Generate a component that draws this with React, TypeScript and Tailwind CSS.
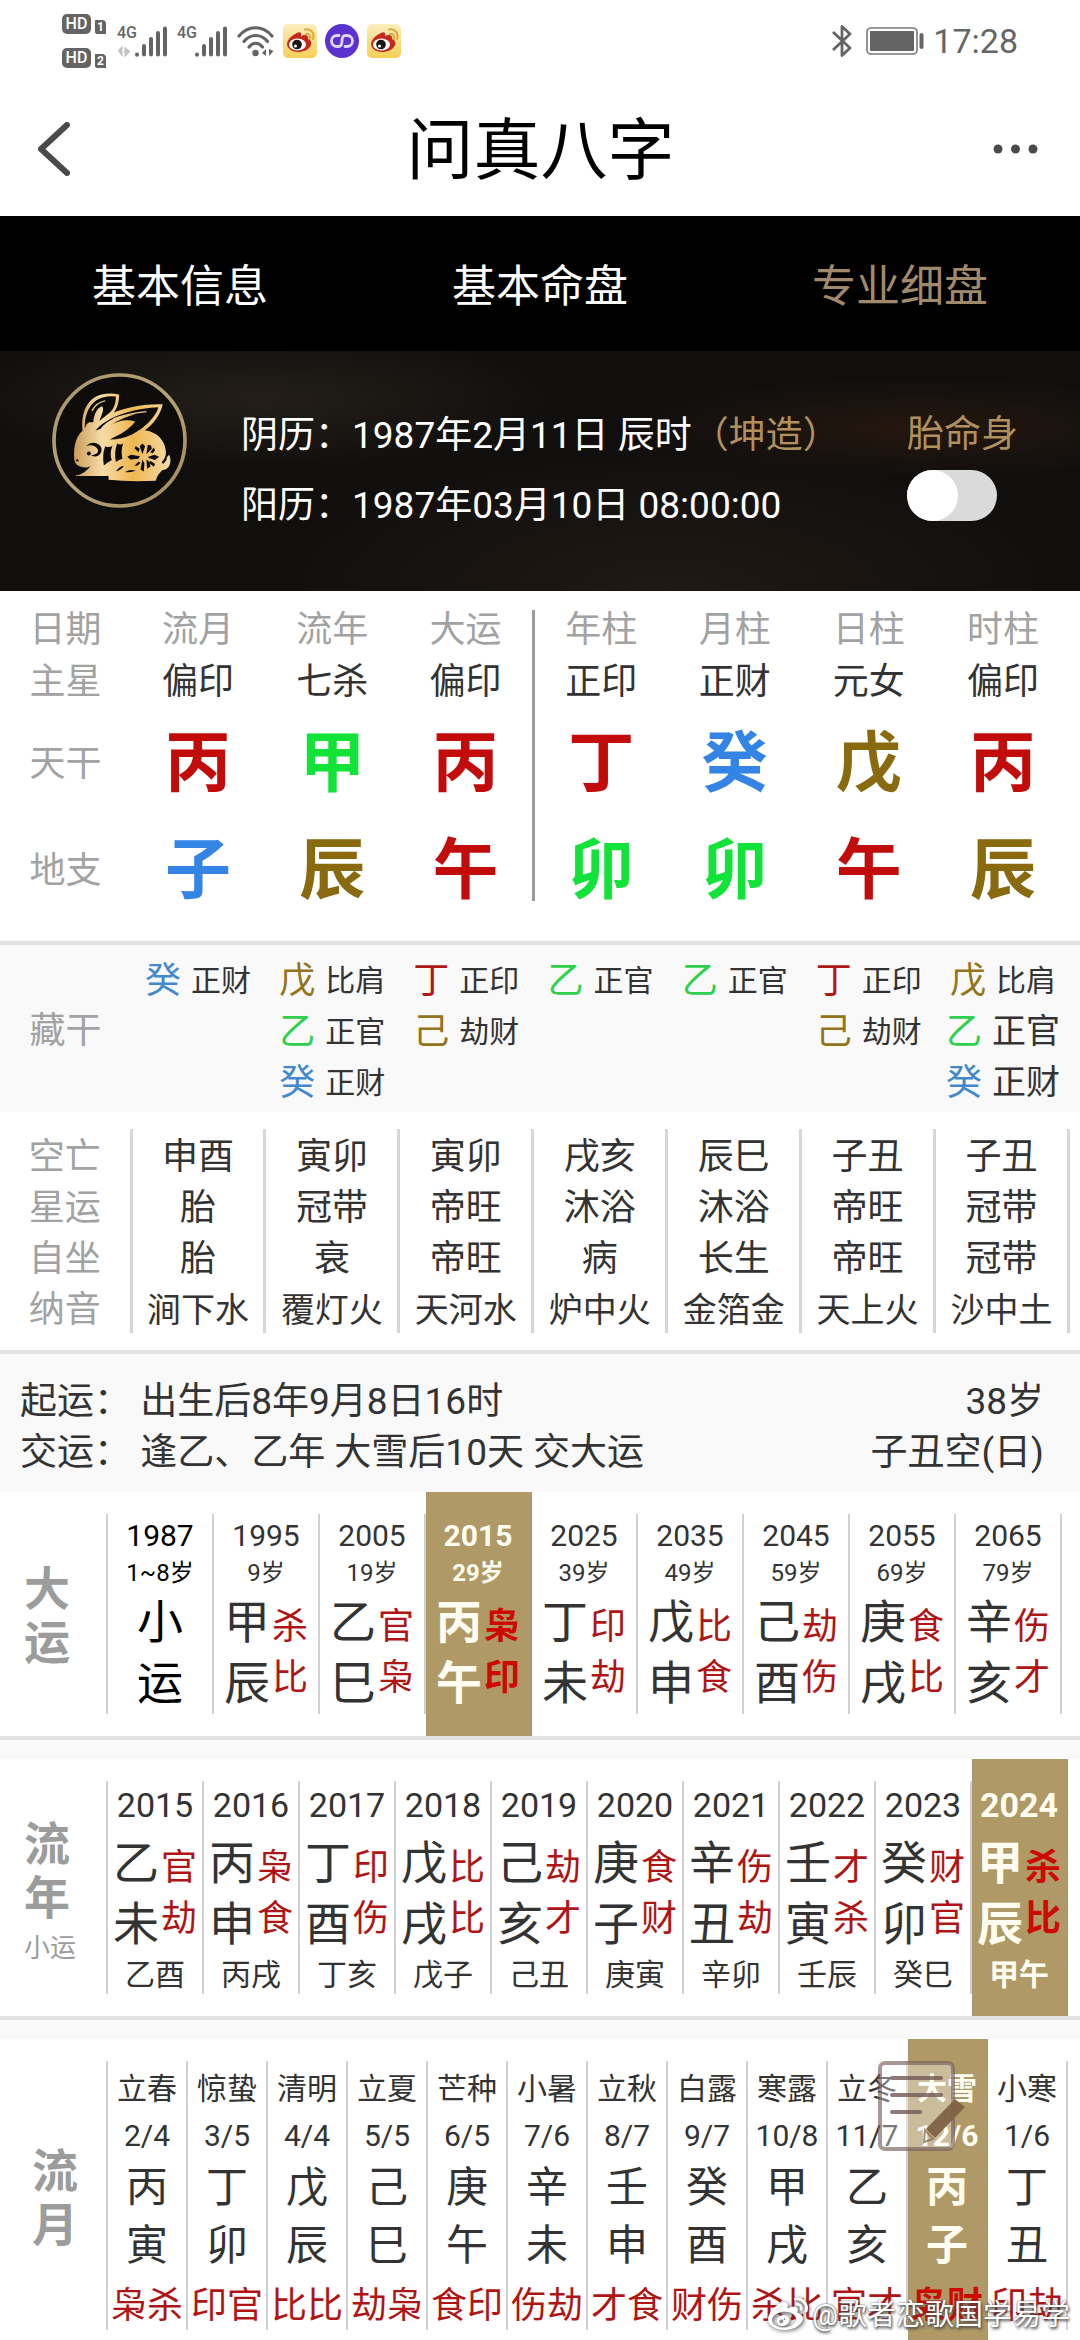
import React, { useState } from 'react';
import { FaWeibo } from 'react-icons/fa';

type Element = 'fire' | 'wood' | 'water' | 'earth';

const elementColor: Record<Element, string> = {
  fire: 'text-[#c20c0c]',
  wood: 'text-[#12e338]',
  water: 'text-[#3384e4]',
  earth: 'text-[#8a6a0f]',
};

const hiddenColor: Record<Element, string> = {
  fire: 'text-[#b01818]',
  wood: 'text-[#2fd04e]',
  water: 'text-[#4288cc]',
  earth: 'text-[#94741a]',
};

const stemElement: Record<string, Element> = {
  甲: 'wood',
  乙: 'wood',
  丙: 'fire',
  丁: 'fire',
  戊: 'earth',
  己: 'earth',
  癸: 'water',
  子: 'water',
  卯: 'wood',
  辰: 'earth',
  午: 'fire',
};

interface Pillar {
  name: string;
  star: string;
  stem: string;
  branch: string;
  hidden: string[][];
  details: string[];
}

const pillars: Pillar[] = [
  { name: '流月', star: '偏印', stem: '丙', branch: '子', hidden: [['癸', '正财']], details: ['申酉', '胎', '胎', '涧下水'] },
  { name: '流年', star: '七杀', stem: '甲', branch: '辰', hidden: [['戊', '比肩'], ['乙', '正官'], ['癸', '正财']], details: ['寅卯', '冠带', '衰', '覆灯火'] },
  { name: '大运', star: '偏印', stem: '丙', branch: '午', hidden: [['丁', '正印'], ['己', '劫财']], details: ['寅卯', '帝旺', '帝旺', '天河水'] },
  { name: '年柱', star: '正印', stem: '丁', branch: '卯', hidden: [['乙', '正官']], details: ['戌亥', '沐浴', '病', '炉中火'] },
  { name: '月柱', star: '正财', stem: '癸', branch: '卯', hidden: [['乙', '正官']], details: ['辰巳', '沐浴', '长生', '金箔金'] },
  { name: '日柱', star: '元女', stem: '戊', branch: '午', hidden: [['丁', '正印'], ['己', '劫财']], details: ['子丑', '帝旺', '帝旺', '天上火'] },
  { name: '时柱', star: '偏印', stem: '丙', branch: '辰', hidden: [['戊', '比肩'], ['乙', '正官'], ['癸', '正财']], details: ['子丑', '冠带', '冠带', '沙中土'] },
];

const detailLabels = ['空亡', '星运', '自坐', '纳音'];

const decades = [
  { year: '1987', age: '1~8岁', pair: '小运', gods: '' },
  { year: '1995', age: '9岁', pair: '甲辰', gods: '杀比' },
  { year: '2005', age: '19岁', pair: '乙巳', gods: '官枭' },
  { year: '2015', age: '29岁', pair: '丙午', gods: '枭印' },
  { year: '2025', age: '39岁', pair: '丁未', gods: '印劫' },
  { year: '2035', age: '49岁', pair: '戊申', gods: '比食' },
  { year: '2045', age: '59岁', pair: '己酉', gods: '劫伤' },
  { year: '2055', age: '69岁', pair: '庚戌', gods: '食比' },
  { year: '2065', age: '79岁', pair: '辛亥', gods: '伤才' },
];

const years = [
  { year: '2015', pair: '乙未', gods: '官劫', minor: '乙酉' },
  { year: '2016', pair: '丙申', gods: '枭食', minor: '丙戌' },
  { year: '2017', pair: '丁酉', gods: '印伤', minor: '丁亥' },
  { year: '2018', pair: '戊戌', gods: '比比', minor: '戊子' },
  { year: '2019', pair: '己亥', gods: '劫才', minor: '己丑' },
  { year: '2020', pair: '庚子', gods: '食财', minor: '庚寅' },
  { year: '2021', pair: '辛丑', gods: '伤劫', minor: '辛卯' },
  { year: '2022', pair: '壬寅', gods: '才杀', minor: '壬辰' },
  { year: '2023', pair: '癸卯', gods: '财官', minor: '癸巳' },
  { year: '2024', pair: '甲辰', gods: '杀比', minor: '甲午' },
];

const months = [
  { term: '立春', date: '2/4', pair: '丙寅', gods: '枭杀' },
  { term: '惊蛰', date: '3/5', pair: '丁卯', gods: '印官' },
  { term: '清明', date: '4/4', pair: '戊辰', gods: '比比' },
  { term: '立夏', date: '5/5', pair: '己巳', gods: '劫枭' },
  { term: '芒种', date: '6/5', pair: '庚午', gods: '食印' },
  { term: '小暑', date: '7/6', pair: '辛未', gods: '伤劫' },
  { term: '立秋', date: '8/7', pair: '壬申', gods: '才食' },
  { term: '白露', date: '9/7', pair: '癸酉', gods: '财伤' },
  { term: '寒露', date: '10/8', pair: '甲戌', gods: '杀比' },
  { term: '立冬', date: '11/7', pair: '乙亥', gods: '官才' },
  { term: '大雪', date: '12/6', pair: '丙子', gods: '枭财' },
  { term: '小寒', date: '1/6', pair: '丁丑', gods: '印劫' },
];

const HdBadge = ({ sim }: { sim: string }) => (
  <div className="flex items-end gap-1">
    <span className="flex h-5 w-[29px] items-center justify-center rounded-[5px] bg-[#646464] text-base font-medium text-white">HD</span>
    <span className="flex h-[14px] w-[11px] items-center justify-center rounded-tr-[4px] rounded-bl-[2px] bg-[#646464] text-xs font-bold text-white">{sim}</span>
  </div>
);

const Signal = ({ arrows }: { arrows?: boolean }) => (
  <div className="relative h-[31px] w-[50px]">
    <span className="absolute top-0 left-0 text-base leading-[14px] font-medium text-[#646464]">4G</span>
    <svg className="h-full w-full" viewBox="0 0 50 31" fill="none">
      {arrows && <path d="M1 25l4-4v9M8 21v9l5-5" fill="#c4c4c4" stroke="#c4c4c4" strokeWidth="1.2" />}
      <path d="M20 28.5v.2M27 20v8.500M34 13v15.500M41 7v21.500M48 2.500v26" stroke="#646464" strokeWidth="4" strokeLinecap="round" />
    </svg>
  </div>
);

const WifiIcon = () => (
  <svg className="h-[31px] w-[38px]" viewBox="0 0 38 31" fill="none">
    <path d="M2 10C11-1 26-1 35 10M7 15.500c6.500-8 17-8 23.500 0M12 21c4-5 9.500-5 13.500 0" stroke="#646464" strokeWidth="3.200" strokeLinecap="round" />
    <circle cx="18.500" cy="27" r="3.200" fill="#646464" />
    <path d="M25 27l4-4v7zM32 23v7l4.500-5z" fill="#646464" />
  </svg>
);

const WeiboAppIcon = ({ id }: { id: string }) => (
  <svg className="size-[34px]" viewBox="0 0 34 34" fill="none">
    <defs>
      <linearGradient id={id} x1="0" y1="0" x2="0" y2="1">
        <stop offset="0" stopColor="#fbeec0" />
        <stop offset="1" stopColor="#f6cf55" />
      </linearGradient>
    </defs>
    <rect width="34" height="34" rx="5" fill={`url(#${id})`} />
    <path d="M14 9c3-2 5 0 4 3 4-2 8-1 7 3 3 1 4 4 3 6-2 5-8 7-13 7S4 25 4 20c0-4 5-9 10-11z" fill="#c8281c" />
    <ellipse cx="14.500" cy="20.500" rx="8.500" ry="6" fill="#fff" />
    <circle cx="14" cy="20.500" r="4.800" fill="#1b1410" />
    <circle cx="12.500" cy="22" r="1.500" fill="#fff" />
    <path d="M23 10c3-1 5 2 4 5M22 5.500c6-1.500 10 4 8 9.500" stroke="#dba93a" strokeWidth="2" strokeLinecap="round" />
  </svg>
);

const LoopAppIcon = () => (
  <svg className="size-[34px]" viewBox="0 0 34 34" fill="none">
    <circle cx="17" cy="17" r="17" fill="#5b32cf" />
    <path d="M14 11.500h-2a5.500 5.500 0 000 11h1.500c3 0 3.500-2 3.500-5.500s.5-5.500 3.500-5.500H22a5.500 5.500 0 010 11h-2" stroke="#e0d6f5" strokeWidth="2.800" strokeLinecap="round" />
  </svg>
);

const StatusBar = () => (
  <div className="flex h-[82px] items-center justify-between pr-[62px] pl-[62px]">
    <div className="flex items-center">
      <div className="flex flex-col gap-[14px]">
        <HdBadge sim="1" />
        <HdBadge sim="2" />
      </div>
      <div className="ml-[11px] flex items-center gap-[10px]">
        <Signal arrows />
        <Signal />
        <WifiIcon />
      </div>
      <div className="ml-2 flex items-center gap-2">
        <WeiboAppIcon id="weibo-a" />
        <LoopAppIcon />
        <WeiboAppIcon id="weibo-b" />
      </div>
    </div>
    <div className="flex items-center">
      <svg className="h-8 w-5" viewBox="0 0 20 32" fill="none">
        <path d="M1 7l17 16-8 7.500v-29L18 9 1 25" stroke="#646464" strokeWidth="2.800" strokeLinejoin="round" />
      </svg>
      <svg className="ml-[14px] h-7 w-[58px]" viewBox="0 0 58 28" fill="none">
        <rect x="1" y="1" width="50" height="26" rx="4" stroke="#777" strokeWidth="1.600" />
        <rect x="4" y="4" width="44" height="20" rx="1" fill="#646464" />
        <rect x="53.500" y="6" width="4" height="16" rx="2" fill="#646464" />
      </svg>
      <span className="ml-[9px] text-[34px] leading-none text-[#666]">17:28</span>
    </div>
  </div>
);

const RabbitIcon = () => (
  <svg className="size-[135px] shrink-0" viewBox="66 38 406 406" fill="none">
    <defs>
      <linearGradient id="gold" x1="130" y1="0" x2="420" y2="0" gradientUnits="userSpaceOnUse">
        <stop offset="0" stopColor="#c89a56" />
        <stop offset="0.300" stopColor="#f7dca8" />
        <stop offset="0.620" stopColor="#efb751" />
        <stop offset="1" stopColor="#f5d9a4" />
      </linearGradient>
      <linearGradient id="ring" x1="0" y1="0" x2="1" y2="1">
        <stop offset="0" stopColor="#a8946a" />
        <stop offset="0.500" stopColor="#b7a377" />
        <stop offset="1" stopColor="#a18a58" />
      </linearGradient>
    </defs>
    <circle cx="269" cy="241" r="197" fill="#0d0c0b" stroke="url(#ring)" strokeWidth="11" />
    <path
      d="M133 298C129 252 143 224 158 212C152 160 172 112 215 103Q242 97 268 103C268 125 262 145 252 157C290 140 350 130 399 132C394 160 370 195 345 210C386 216 412 245 409 290Q416 292 418 282C428 305 420 328 398 330C388 340 382 348 378 362Q300 366 236 359V348H137C142 338 162 332 174 322C155 322 135 318 133 298Z"
      fill="url(#gold)"
    />
    <g fill="#0d0c0b">
      <path d="M165 206C163 160 182 122 218 112Q240 106 258 109C258 130 252 146 240 157L208 182C218 160 224 144 216 138C200 144 192 165 190 186L178 186Q168 190 165 206Z" />
      <path d="M196 212C228 172 306 144 386 141C378 170 345 203 308 222Q275 238 240 238C265 226 300 208 316 184C290 176 262 182 240 196Q280 170 318 162C268 162 228 182 212 206Z" />
      <path d="M226 258Q240 264 248 256Q238 282 246 300Q232 308 222 316Q216 284 226 258ZM262 250Q272 256 280 250Q272 272 278 296Q268 298 258 306Q252 276 262 250Z" />
      <path d="M168 258Q188 240 208 254Q222 268 210 282Q200 294 184 286Q208 282 204 268Q192 250 168 258Z" />
      <circle cx="177" cy="280" r="6" />
      <circle cx="142" cy="301" r="3.500" />
      <path d="M136 324Q165 330 182 318Q166 340 142 346L138 334ZM258 334Q270 318 282 318Q276 330 258 334ZM286 336Q300 326 318 332Q304 338 286 336ZM396 306Q408 294 409 276Q418 296 400 312Z" />
      <path d="M338 282l-8-24 8-8 8 8zM350 282l4-28 10 2 2 10zM338 298l-6 30 10 6 2-24zM350 298l2 28 10-6-2-14zM330 288l-26-4-12 6 10 8 24-2zM356 290l18-6 14 6-12 10-20-6zM326 276l-12-12 4-6 12 8zM362 276l10-14 4 8-8 10zM326 304l-12 14 10-2 8-8zM362 302l14 10-4 8-12-10z" />
    </g>
    <path d="M186 152Q200 126 226 122M250 176Q300 158 350 154" stroke="#e6c68c" strokeWidth="4" />
  </svg>
);

const BirthHeader = () => {
  const [showPalace, setShowPalace] = useState(false);

  return (
    <section className="flex h-[240px] items-start bg-[#110f0e] bg-[radial-gradient(ellipse_at_85%_32%,#24170f_0%,transparent_22%),radial-gradient(ellipse_at_24%_20%,#231e18_0%,transparent_26%),radial-gradient(ellipse_at_62%_100%,#201913_0%,transparent_42%)] pr-[62px] pl-[52px]">
      <div className="pt-[22px]">
        <RabbitIcon />
      </div>
      <div className="ml-[54px] pt-[50px] text-[37px] leading-[70px] whitespace-nowrap text-white">
        <p>
          阴历：1987年2月11日 辰时<span className="text-[#b0905c]">（坤造）</span>
        </p>
        <p>阳历：1987年03月10日 08:00:00</p>
      </div>
      <label className="ml-auto flex flex-col items-start gap-[7px] pt-14 text-[37px] leading-[56px] text-[#b0905c]">
        胎命身
        <input
          type="checkbox"
          role="switch"
          checked={showPalace}
          onChange={(e) => setShowPalace(e.target.checked)}
          className="h-[51px] w-[90px] appearance-none rounded-full bg-[#dadada] before:block before:size-[51px] before:rounded-full before:bg-white checked:bg-[#af9a68] checked:before:ml-auto"
        />
      </label>
    </section>
  );
};

const Columns = () => (
  <colgroup>
    <col className="w-[131px]" />
    {pillars.map((p) => (
      <col key={p.name} />
    ))}
  </colgroup>
);

// A rule separates the running cycles from the four birth pillars
const splitRule = (index: number) => (index === 3 ? 'border-l-[3px] border-[#9c9c9c]' : '');

const PillarTable = () => (
  <section className="bg-white pt-[19px] pr-[10px] pb-10">
    <table className="w-full table-fixed border-collapse text-center text-4xl">
      <Columns />
      <thead>
        <tr className="h-[41px] leading-[41px] text-[#a2a2a2]">
          <th scope="col" className="p-0 font-normal">日期</th>
          {pillars.map((p, i) => (
            <th key={p.name} scope="col" className={`p-0 font-normal ${splitRule(i)}`}>{p.name}</th>
          ))}
        </tr>
      </thead>
      <tbody>
        <tr className="h-[62px] leading-[60px] text-[#333]">
          <th scope="row" className="p-0 font-normal text-[#a2a2a2]">主星</th>
          {pillars.map((p, i) => (
            <td key={p.name} className={`p-0 ${splitRule(i)}`}>{p.star}</td>
          ))}
        </tr>
        <tr className="h-[102px] leading-[60px]">
          <th scope="row" className="p-0 font-normal text-[#a2a2a2]">天干</th>
          {pillars.map((p, i) => (
            <td key={p.name} className={`p-0 text-[66px] font-bold ${splitRule(i)} ${elementColor[stemElement[p.stem]]}`}>{p.stem}</td>
          ))}
        </tr>
        <tr className="h-[86px] align-bottom leading-[60px]">
          <th scope="row" className="p-0 font-normal text-[#a2a2a2]">地支</th>
          {pillars.map((p, i) => (
            <td key={p.name} className={`p-0 text-[66px] font-bold ${splitRule(i)} ${elementColor[stemElement[p.branch]]}`}>{p.branch}</td>
          ))}
        </tr>
      </tbody>
    </table>
  </section>
);

const HiddenStemTable = () => (
  <section className="border-t-4 border-[#e2e2e2] bg-[#f9f9f9] pt-[10px] pr-[10px] pb-1">
    <table className="w-full table-fixed border-collapse text-center">
      <Columns />
      <tbody>
        <tr className="leading-[51px]">
          <th scope="row" className="p-0 text-4xl leading-[51px] font-normal text-[#a2a2a2]">藏干</th>
          {pillars.map((p) => (
            <td key={p.name} className="p-0 align-top">
              {p.hidden.map(([stem, god], i) => (
                <div key={stem} className="flex h-[51px] items-center justify-center gap-[10px]">
                  <span className={`text-4xl ${hiddenColor[stemElement[stem]]}`}>{stem}</span>
                  <span className={`whitespace-nowrap text-[#333] ${p.name === '时柱' && i > 0 ? 'text-[34px]' : 'text-3xl'}`}>{god}</span>
                </div>
              ))}
            </td>
          ))}
        </tr>
      </tbody>
    </table>
  </section>
);

const DetailTable = () => (
  <section className="bg-white py-[17px] pr-[10px]">
    <table className="w-full table-fixed border-collapse text-center leading-[45px]">
      <Columns />
      <tbody>
        {detailLabels.map((label, row) => (
          <tr key={label} className="h-[51px] text-[#333]">
            <th scope="row" className="px-0 pt-[6px] pb-0 text-4xl leading-[45px] font-normal text-[#a2a2a2]">{label}</th>
            {pillars.map((p) => (
              <td key={p.name} className={`border-x-[3px] border-[#d6d6d6] px-0 pt-[6px] pb-0 leading-[45px] whitespace-nowrap ${row === 3 ? 'text-[34px]' : 'text-4xl'}`}>
                {p.details[row]}
              </td>
            ))}
          </tr>
        ))}
      </tbody>
    </table>
  </section>
);

const LuckSummary = () => (
  <section className="border-t-4 border-[#e2e2e2] bg-[#f9f9f9] pt-[22px] pr-9 pb-[14px] pl-5 text-[37px] leading-[51px] text-[#333]">
    <div className="flex justify-between">
      <p>起运： 出生后8年9月8日16时</p>
      <p>38岁</p>
    </div>
    <div className="flex justify-between">
      <p>交运： 逢乙、乙年 大雪后10天 交大运</p>
      <p>子丑空(日)</p>
    </div>
  </section>
);

interface CycleColumnProps {
  selected: boolean;
  onSelect: () => void;
  children: React.ReactNode;
}

const CycleColumn = ({ selected, onSelect, children }: CycleColumnProps) => (
  <button
    onClick={onSelect}
    aria-pressed={selected}
    className={`flex min-w-0 flex-1 pt-[22px] pb-[22px] whitespace-nowrap ${selected ? 'bg-[#af9966] font-bold text-[#fffdf0]' : 'text-[#333]'}`}
  >
    <span className={`flex flex-1 flex-col items-center self-stretch border-r-2 ${selected ? 'border-transparent' : 'border-[#d0d0d0]'}`}>
      {children}
    </span>
  </button>
);

const CycleLabel = ({ chars, note }: { chars: string; note?: string }) => (
  <div className="flex w-[108px] shrink-0 py-[22px]">
    <h2 className={`flex flex-1 flex-col justify-center border-r-2 border-[#d0d0d0] text-[46px] leading-[54px] font-bold text-[#9c9c9c] ${note ? 'pt-3 pl-6' : 'pt-1 pl-6'} ${chars === '流月' ? 'pl-8' : ''}`}>
      <span>{chars[0]}</span>
      <span>{chars[1]}</span>
      {note && <span className="text-[26px] leading-[46px] font-normal">{note}</span>}
    </h2>
  </div>
);

const PairWithGods = ({ pair, gods, selected }: { pair: string; gods: string; selected: boolean }) => (
  <span className="mt-1 flex items-center gap-[2px]">
    <span className={`flex flex-col text-[46px] leading-[61px] ${gods ? '' : 'text-black'}`}>
      <span>{pair[0]}</span>
      <span>{pair[1]}</span>
    </span>
    {gods && (
      <span className={`flex flex-col text-4xl leading-[51px] ${selected ? 'text-[#cc0a00]' : 'text-[#b01515]'}`}>
        <span>{gods[0]}</span>
        <span>{gods[1]}</span>
      </span>
    )}
  </span>
);

const App: React.FC = () => {
  const [tab, setTab] = useState('专业细盘');
  const [decade, setDecade] = useState('2015');
  const [year, setYear] = useState('2024');
  const [month, setMonth] = useState('大雪');

  return (
    <div className="relative min-h-screen overflow-hidden bg-white font-['Roboto','Noto_Sans_CJK_SC',sans-serif]">
      <StatusBar />

      {/* Title bar */}
      <header className="flex h-[134px] items-center justify-between pr-[42px] pl-[37px]">
        <button aria-label="返回" className="w-[79px]">
          <svg className="h-[54px] w-[34px]" viewBox="0 0 34 54" fill="none">
            <path d="M30 3L4 27l26 24" stroke="#4a4a4a" strokeWidth="6" strokeLinecap="round" strokeLinejoin="round" />
          </svg>
        </button>
        <h1 className="pt-1 text-[67px] leading-none text-black">问真八字</h1>
        <button aria-label="更多" className="flex w-[73px] justify-end">
          <svg className="h-[10px] w-[45px]" viewBox="0 0 45 10">
            <circle cx="5" cy="5" r="4.500" fill="#4a4a4a" />
            <circle cx="22.500" cy="5" r="4.500" fill="#4a4a4a" />
            <circle cx="40" cy="5" r="4.500" fill="#4a4a4a" />
          </svg>
        </button>
      </header>

      {/* Tabs */}
      <nav className="grid h-[135px] grid-cols-3 bg-black pt-[6px] text-[44px]">
        {['基本信息', '基本命盘', '专业细盘'].map((name) => (
          <button key={name} onClick={() => setTab(name)} className={tab === name ? 'text-[#a18a6b]' : 'text-white'}>
            {name}
          </button>
        ))}
      </nav>

      <BirthHeader />
      <PillarTable />
      <HiddenStemTable />
      <DetailTable />
      <LuckSummary />

      {/* Ten-year cycles */}
      <section className="flex bg-white pr-[18px]">
        <CycleLabel chars="大运" />
        {decades.map((d) => (
          <CycleColumn key={d.year} selected={decade === d.year} onSelect={() => setDecade(d.year)}>
            <span className={`text-3xl leading-[44px] ${d.gods ? '' : 'text-black'}`}>{d.year}</span>
            <span className={`text-2xl leading-[30px] ${d.gods ? '' : 'text-black'}`}>{d.age}</span>
            <PairWithGods pair={d.pair} gods={d.gods} selected={decade === d.year} />
          </CycleColumn>
        ))}
      </section>

      {/* Years of the selected cycle */}
      <section className="border-t-4 border-[#e2e2e2] bg-[#f9f9f9] pt-[19px]">
        <div className="flex bg-white pr-3">
          <CycleLabel chars="流年" note="小运" />
          {years.map((y) => (
            <CycleColumn key={y.year} selected={year === y.year} onSelect={() => setYear(y.year)}>
              <span className="text-[34px] leading-[48px]">{y.year}</span>
              <PairWithGods pair={y.pair} gods={y.gods} selected={year === y.year} />
              <span className="text-3xl leading-[39px]">{y.minor}</span>
            </CycleColumn>
          ))}
        </div>
      </section>

      {/* Months */}
      <section className="border-t-4 border-[#e2e2e2] bg-[#f9f9f9] pt-[19px]">
        <div className="relative -mb-3 flex bg-white pr-3">
          <CycleLabel chars="流月" />
          {months.map((m) => (
            <CycleColumn key={m.term} selected={month === m.term} onSelect={() => setMonth(m.term)}>
              <span className="text-3xl leading-[56px]">{m.term}</span>
              <span className="text-3xl leading-[38px]">{m.date}</span>
              <span className="mt-1 flex flex-col text-[42px] leading-[58px]">
                <span>{m.pair[0]}</span>
                <span>{m.pair[1]}</span>
              </span>
              <span className={`mt-2 text-4xl leading-[47px] ${month === m.term ? 'text-[#cc0a00]' : 'text-[#b01515]'}`}>{m.gods}</span>
            </CycleColumn>
          ))}

          {/* Floating note button */}
          <button aria-label="笔记" className="absolute top-[22px] right-[112px]">
            <svg className="h-[90px] w-[90px]" viewBox="0 0 90 90" fill="none">
              <rect x="2" y="2" width="73" height="86" rx="5" fill="#fff" fillOpacity="0.350" stroke="#786060" strokeOpacity="0.650" strokeWidth="4" />
              <path d="M14 17h49M14 34h49M14 51h28" stroke="#705855" strokeOpacity="0.800" strokeWidth="4" strokeLinecap="round" />
              <path d="M77 38l10 8-30 31-9-9z" fill="#806245" fillOpacity="0.950" />
              <path d="M47 69l8 9-9 3z" stroke="#806245" strokeOpacity="0.700" strokeWidth="2" />
            </svg>
          </button>
        </div>
      </section>

      {/* Watermark */}
      <div className="pointer-events-none absolute right-[10px] bottom-1 flex items-center gap-1 text-[29px] leading-[42px] text-white [text-shadow:1px_2px_3px_#444,0_0_2px_#555]">
        <FaWeibo className="size-10 drop-shadow-[1px_1px_2px_#444]" />
        <span>@歌者恋歌国学易学</span>
      </div>
    </div>
  );
};

export default App;
